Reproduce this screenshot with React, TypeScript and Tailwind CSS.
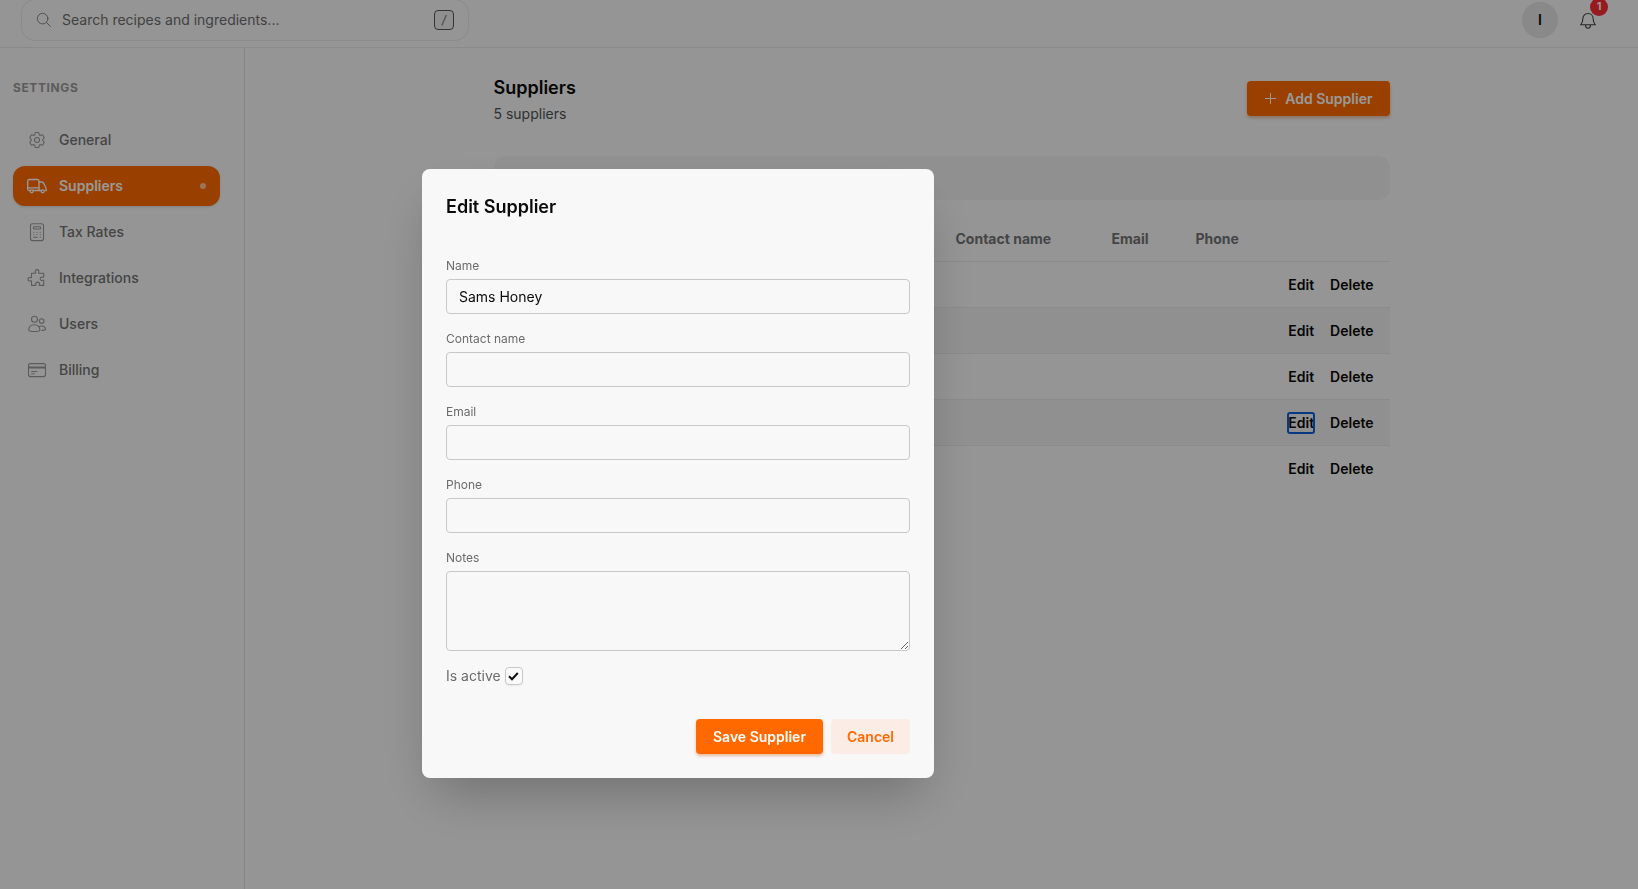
import React from "react";
import { HiOutlineCog6Tooth } from "react-icons/hi2";

const iconBase = {
  fill: "none",
  stroke: "currentColor",
  strokeWidth: 1.1,
  strokeLinecap: "round" as const,
  strokeLinejoin: "round" as const,
  "aria-hidden": true,
};

function Icon({ children, className = "size-5" }: { children: React.ReactNode; className?: string }) {
  return (
    <svg viewBox="0 0 20 20" className={className} {...iconBase}>
      {children}
    </svg>
  );
}

const GearIcon = () => <HiOutlineCog6Tooth className="size-5" strokeWidth={1.3} aria-hidden />;

const TruckIcon = () => (
  <Icon>
    <g strokeWidth="1.300">
      <path d="M3.100 14.500H2.200C1.300 14.500.7 13.900.7 13V5c0-.9.6-1.500 1.500-1.500h8.300c.9 0 1.500.6 1.500 1.500v9.500H6.300" />
      <path d="M.7 11.800H12M12 6h2.200c1.300 0 2.300.6 2.900 1.900l1.500 3.400c.4.900.7 1.900.7 3.200h-1M14 14.500h-2" />
      <circle cx="4.700" cy="15.300" r="1.500" />
      <circle cx="15.700" cy="15.300" r="1.500" />
    </g>
  </Icon>
);

const CalculatorIcon = () => (
  <Icon>
    <rect x="3.500" y="1.800" width="13" height="16.800" rx="2" />
    <rect x="6.500" y="4.800" width="7" height="2.200" rx=".6" />
    <path d="M6.700 10.200h.2M10 10.200h.2M13.200 10.200h.2M6.700 12.700h.2M10 12.700h.2M13.200 12.700h.2M6.700 15.200h3.500M13.200 15.200h.2" />
  </Icon>
);

const PuzzleIcon = () => (
  <Icon>
    <path d="M4.500 5.300h3.600c.5 0 .7-.4.500-.8-.8-1.500.1-2.900 1.500-2.900s2.300 1.400 1.500 2.900c-.2.400 0 .8.500.8h4.600v3.400c0 .5-.4.700-.8.500-1.400-.6-2.700.2-2.700 1.500s1.300 2.200 2.700 1.500c.4-.2.800.1.800.5v4.700h-3.900c-.5 0-.7-.4-.5-.8.6-1.300-.3-2.500-1.700-2.500s-2.300 1.200-1.700 2.500c.2.400 0 .8-.5.800H4.500v-4.100c0-.5-.4-.7-.8-.5-1.400.7-2.700-.2-2.700-1.500s1.300-2.200 2.700-1.500c.4.200.8 0 .8-.5Z" />
  </Icon>
);

const UsersIcon = () => (
  <Icon>
    <circle cx="7.500" cy="5.200" r="3" />
    <circle cx="14.700" cy="7" r="2.300" />
    <path d="M1.700 16c0-3 2.300-5.300 5.600-5.300s5.600 2.300 5.600 5.300c0 .6-1.500 1.500-5.600 1.500S1.700 16.600 1.700 16Z" />
    <path d="M12.300 12.700c.7-.5 1.500-.7 2.400-.7 2.300 0 3.800 1.500 3.800 3.300 0 .6-1 1-3.600 1.100" />
  </Icon>
);

const CardIcon = () => (
  <Icon>
    <rect x="1.500" y="3.600" width="17" height="13" rx="2" />
    <path d="M1.700 7h16.600M1.700 8h16.600M4.600 11.500h5M4.600 13.800h2.600" />
  </Icon>
);

const SearchIcon = () => (
  <Icon className="size-4 text-[#777]">
    <circle cx="8.300" cy="8.300" r="6.600" />
    <path d="m13.200 13.200 4.800 4.800" />
  </Icon>
);

const BellIcon = () => (
  <Icon className="size-5 text-[#444]">
    <path d="M2.500 14.700h15M2.800 14.700c1.500-1.400 2-2.800 2-5.600 0-3.100 2-5.600 5.200-5.600s5.200 2.500 5.200 5.600c0 2.800.5 4.200 2 5.600M7.500 15c0 2 .9 3.200 2.500 3.200s2.500-1.200 2.500-3.200" />
  </Icon>
);

const navItems = [
  { label: "General", icon: GearIcon },
  { label: "Suppliers", icon: TruckIcon, active: true },
  { label: "Tax Rates", icon: CalculatorIcon },
  { label: "Integrations", icon: PuzzleIcon },
  { label: "Users", icon: UsersIcon },
  { label: "Billing", icon: CardIcon },
];

const rows = [
  { id: 1 },
  { id: 2 },
  { id: 3 },
  { id: 4, focused: true },
  { id: 5 },
];

function Header() {
  return (
    <header className="flex h-12 shrink-0 items-end justify-between border-b border-[#e8e8e8] pr-10 pl-[21px]">
      <label className="mb-1.5 flex h-[42px] w-full max-w-[448px] shrink-0 items-center rounded-[14px] border border-[#e8e8e8] px-[14px]">
        <SearchIcon />
        <input
          type="text"
          aria-label="Search"
          placeholder="Search recipes and ingredients..."
          className="ml-2.5 min-w-0 flex-1 bg-transparent outline-none placeholder:text-[#6f6f6f]"
        />
        <kbd className="flex size-5 items-center justify-center rounded-[4px] border border-[#555] bg-[#eee] font-[Inter] text-xs text-[#666] italic">/</kbd>
      </label>
      <div className="mb-[9px] flex items-center gap-5">
        <button className="size-9 rounded-full bg-[#e4e4e7] font-semibold text-[#0a0a0a]">I</button>
        <button aria-label="Notifications" className="relative">
          <BellIcon />
          <span className="absolute -top-3 left-3 flex size-[18px] items-center justify-center rounded-full bg-[#fb2c36] text-[11px] font-bold text-white">1</span>
        </button>
      </div>
    </header>
  );
}

function Sidebar() {
  return (
    <aside className="w-[245px] shrink-0 border-r border-[#e0e0e0] pt-8 pr-6 pl-[13px]">
      <h2 className="text-xs leading-4 font-bold tracking-wider text-[#999]">SETTINGS</h2>
      <nav className="mt-6 flex flex-col gap-1.5">
        {navItems.map(({ label, icon: NavIcon, active }) => (
          <a
            key={label}
            href="#"
            className={
              active
                ? "flex h-10 items-center gap-3 rounded-xl bg-[#ff6900] px-[14px] font-semibold text-white shadow-sm"
                : "flex h-10 items-center gap-3 rounded-xl px-[14px] font-medium text-[#737373]"
            }
          >
            <span className={active ? "text-white" : "text-[#999]"}>
              <NavIcon />
            </span>
            {label}
            {active && <span className="ml-auto size-1.5 rounded-full bg-white/60" />}
          </a>
        ))}
      </nav>
    </aside>
  );
}

function SupplierTable() {
  return (
    <table className="mt-[15px] w-full table-fixed border-collapse text-left">
      <thead>
        <tr className="h-[46px] border-b border-[#e8e8e8] text-[#737373]">
          <td />
          <th className="w-[156px] px-4 pt-0.5 font-bold">Contact name</th>
          <th className="w-[84px] px-4 pt-0.5 font-bold">Email</th>
          <th className="w-[92px] px-4 pt-0.5 font-bold">Phone</th>
          <td className="w-[118px]" />
        </tr>
      </thead>
      <tbody>
        {rows.map((row) => (
          <tr key={row.id} className="h-[46px] border-b border-[#e8e8e8] last:border-0 even:bg-[#f1f1f1]">
            <td />
            <td />
            <td />
            <td />
            <td className="pt-0.5 pr-4">
              <div className="flex justify-end gap-4 font-semibold text-[#0a0a0a]">
                <button className={row.focused ? "rounded-[2px] outline-2 -outline-offset-1 outline-[#0a5fd8]" : ""}>Edit</button>
                <button>Delete</button>
              </div>
            </td>
          </tr>
        ))}
      </tbody>
    </table>
  );
}

function Field({ id, label, value = "" }: { id: string; label: string; value?: string }) {
  return (
    <div>
      <label htmlFor={id} className="block text-xs leading-4 text-[#6b6b6b]">{label}</label>
      <input
        id={id}
        type="text"
        defaultValue={value}
        className="mt-[5px] block h-[35px] w-full rounded-[4px] border border-[#c8c8c8] bg-transparent px-3 text-[#0a0a0a]"
      />
    </div>
  );
}

function EditDialog() {
  return (
    <div className="fixed inset-0 flex items-start justify-center bg-black/40 pt-[169px] pr-[282px]">
      <form role="dialog" aria-label="Edit Supplier" className="w-full max-w-lg rounded-lg bg-[#f8f8f8] p-6 shadow-2xl">
        <h2 className="text-lg leading-7 font-semibold text-[#0a0a0a]">Edit Supplier</h2>
        <div className="mt-[37px] flex flex-col gap-[17px]">
          <Field id="name" label="Name" value="Sams Honey" />
          <Field id="contact" label="Contact name" />
          <Field id="email" label="Email" />
          <Field id="phone" label="Phone" />
          <div>
            <label htmlFor="notes" className="block text-xs leading-4 text-[#6b6b6b]">Notes</label>
            <textarea id="notes" className="mt-[5px] block h-20 w-full rounded-[4px] border border-[#c8c8c8] bg-transparent px-3 py-2" />
          </div>
        </div>
        <label className="mt-[15px] flex h-5 items-center gap-1 text-[#6b6b6b]">
          Is active
          <span className="grid size-[18px]">
            <input type="checkbox" defaultChecked className="peer col-start-1 row-start-1 size-[18px] appearance-none rounded-[4px] border border-[#c8c8c8] bg-[#fafafa] shadow-xs" />
            <svg viewBox="0 0 18 18" className="pointer-events-none invisible col-start-1 row-start-1 size-[18px] peer-checked:visible" fill="none" stroke="#111" strokeWidth="2" aria-hidden="true">
              <path d="m4 9.300 3 3L12.800 6" />
            </svg>
          </span>
        </label>
        <div className="mt-[33px] flex justify-end gap-2 font-semibold">
          <button type="button" className="h-[35px] rounded-[4px] bg-[#ff6900] px-[17px] text-white shadow-[0_2px_3px_rgba(200,80,0,0.35)]">Save Supplier</button>
          <button type="button" className="h-[35px] rounded-[4px] bg-[#fbede6] px-4 text-[#ff6900]">Cancel</button>
        </div>
      </form>
    </div>
  );
}

export default function App() {
  return (
    <div className="flex min-h-screen flex-col overflow-hidden bg-[#f8f8f8] font-[Inter,sans-serif] text-sm text-[#0a0a0a]">
      <Header />
      <div className="flex flex-1">
        <Sidebar />
        <main className="flex-1">
          <div className="mx-auto max-w-4xl pt-6">
            <div className="flex items-start justify-between">
              <div>
                <h1 className="text-lg leading-8 font-semibold">Suppliers</h1>
                <p className="leading-5 text-[#525252]">5 suppliers</p>
              </div>
              <button className="mt-[9px] flex h-[35px] items-center gap-2 rounded-[4px] bg-[#ff6900] px-[17px] font-semibold text-white shadow-[0_2px_3px_rgba(200,80,0,0.35)]">
                <svg viewBox="0 0 13 13" className="size-[13px]" stroke="currentColor" fill="none" aria-hidden="true">
                  <path d="M6.500 1v11M1 6.500h11" />
                </svg>
                Add Supplier
              </button>
            </div>
            <div className="mt-8 h-11 rounded-xl bg-[#f1f1f1]" />
            <SupplierTable />
          </div>
        </main>
      </div>
      <EditDialog />
    </div>
  );
}
